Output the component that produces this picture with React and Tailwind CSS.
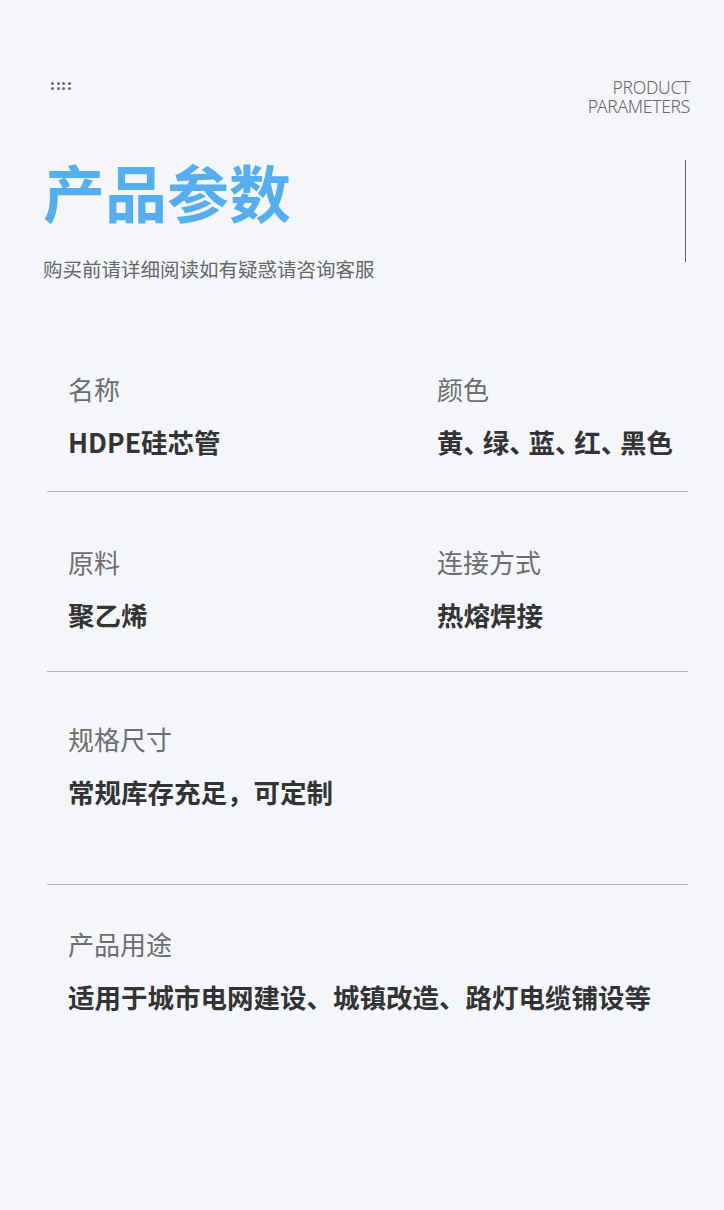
import React from "react";

const cjk = "font-['Noto_Sans_CJK_SC','Noto_Sans',sans-serif]";

const rows = [
  {
    pad: "pt-[93px] pb-[32px]",
    items: [
      { label: "名称", value: "HDPE硅芯管" },
      { label: "颜色", value: "黄、绿、蓝、红、黑色", tight: true },
    ],
  },
  {
    pad: "pt-[55px] pb-[39px]",
    items: [
      { label: "原料", value: "聚乙烯" },
      { label: "连接方式", value: "热熔焊接" },
    ],
  },
  {
    pad: "pt-[52px] pb-[75px]",
    items: [{ label: "规格尺寸", value: "常规库存充足，可定制" }],
  },
  {
    pad: "pt-[44px] pb-[40px]",
    items: [{ label: "产品用途", value: "适用于城市电网建设、城镇改造、路灯电缆铺设等" }],
    last: true,
  },
];

function Dots() {
  return (
    <div className="grid grid-cols-4 gap-x-[2.5px] gap-y-[2px] w-fit ml-[8px] mt-[4px]">
      {Array.from({ length: 8 }).map((_, i) => (
        <span key={i} className="w-[3px] h-[3px] rounded-full bg-[#6a6a6a]" />
      ))}
    </div>
  );
}

// the colour list sets its enumeration commas narrower than full width
function Value({ text, tight }) {
  if (!tight) return text;
  return text.split("、").map((part, i, arr) => (
    <React.Fragment key={i}>
      {part}
      {i < arr.length - 1 && (
        <span className="[font-feature-settings:'halt'] mr-[6px]">、</span>
      )}
    </React.Fragment>
  ));
}

export default function App() {
  return (
    <div className={`w-[724px] h-[1210px] bg-[#f4f6fa] overflow-hidden ${cjk}`}>
      {/* header */}
      <div className="flex justify-between items-start pt-[78px] pl-[43px] pr-[34px]">
        <div className="flex flex-col">
          <Dots />
          <h1 className="mt-[70px] text-[62px] leading-[62px] font-bold text-[#55aef0]">
            产品参数
          </h1>
          <p className="mt-[35px] text-[19.5px] leading-[24px] text-[#666]">
            购买前请详细阅读如有疑惑请咨询客服
          </p>
        </div>
        <div className="flex flex-col items-end">
          <p className="font-['Noto_Sans',sans-serif] font-light text-[17.5px] leading-[19px] text-[#666] text-right tracking-[-0.3px]">
            PRODUCT
            <br />
            PARAMETERS
          </p>
          <div className="mt-[44px] mr-[4px] w-px h-[102px] bg-[#666]" />
        </div>
      </div>

      {/* parameters */}
      <div className="ml-[47px] w-[641px]">
        {rows.map((row, i) => (
          <div
            key={i}
            className={`grid grid-cols-[369px_1fr] pl-[21px] ${row.pad} ${
              row.last ? "" : "border-b border-[#b4b4b4]"
            }`}
          >
            {row.items.map((it) => (
              <div key={it.label} className={row.items.length === 1 ? "col-span-2" : ""}>
                <div className="text-[26px] leading-[30px] text-[#6d6d6d]">{it.label}</div>
                <div className="mt-[21px] text-[26.5px] leading-[34px] font-bold text-[#333] whitespace-nowrap">
                  <Value text={it.value} tight={it.tight} />
                </div>
              </div>
            ))}
          </div>
        ))}
      </div>
    </div>
  );
}
